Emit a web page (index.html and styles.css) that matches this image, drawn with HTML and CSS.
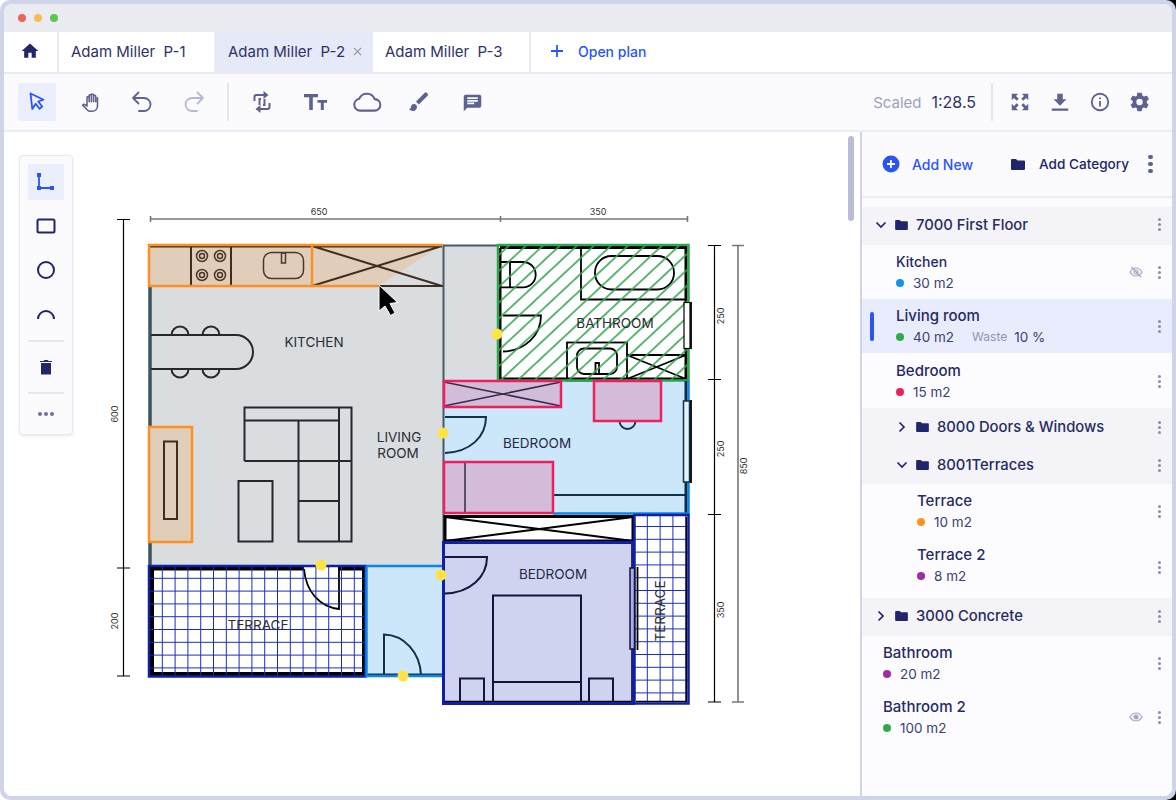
FILE: index.html
```html
<!DOCTYPE html>
<html lang="en">
<head>
<meta charset="utf-8">
<title>Plan</title>
<link rel="stylesheet" href="styles.css">
</head>
<body>
<div class="window">
  <div class="titlebar">
    <span class="light light-red"></span><span class="light light-yellow"></span><span class="light light-green"></span>
  </div>
  <div class="tabs">
    <div class="tab tab-home"><svg class="ico-20" viewBox="0 0 24 24"><path class="f-navy" d="M10 20v-6h4v6h5v-8h3L12 3 2 12h3v8z"/></svg></div>
    <div class="tab">Adam Miller&nbsp; P-1</div>
    <div class="tab tab-active">Adam Miller&nbsp; P-2<svg class="tab-x" viewBox="0 0 10 10"><path d="M1 1l8 8M9 1l-8 8"/></svg></div>
    <div class="tab">Adam Miller&nbsp; P-3</div>
    <div class="open-plan"><svg class="plus" viewBox="0 0 14 14"><path d="M7 1v12M1 7h12"/></svg><span>Open plan</span></div>
  </div>
  <div class="toolbar">
    <div class="tool tool-active"><svg class="ico-20" viewBox="0 0 20 20"><path class="s-blue" d="M3.500 1.500l13 6.200-5.300 1.800 4 5-2.700 2.300-3.900-5.100L5.300 17z"/></svg></div>
    <div class="tool tool-hand"><svg class="ico-21" viewBox="0 0 24 24"><path class="s-slate" d="M20 6.500V16c0 3.600-2.600 6-6 6h-2.300c-1.400 0-2.500-.6-3.300-1.500L3 15s1-1.300 2.200-.8L8 16V6.500a1.200 1.200 0 0 1 2.500 0V11V4.200a1.200 1.200 0 0 1 2.500 0V11V3.500a1.200 1.200 0 0 1 2.500 0V11V5a1.200 1.200 0 0 1 2.500 0v6"/></svg></div>
    <div class="tool tool-undo"><svg class="ico-24" viewBox="0 0 24 24"><path class="s-slate" d="M8.500 2.500L3 8l5.500 5.500M3 8H14a6.500 6.500 0 0 1 0 13H9"/></svg></div>
    <div class="tool tool-redo"><svg class="ico-24" viewBox="0 0 24 24"><path class="s-faded" d="M15.500 2.500L21 8l-5.500 5.500M21 8H10a6.500 6.500 0 0 0 0 13h5"/></svg></div>
    <div class="tool-sep"></div>
    <div class="tool tool-crop"><svg class="ico-24" viewBox="0 0 24 24"><path class="s-slate-b" d="M4.500 11V7a2 2 0 0 1 2-2H14M19.500 13v4a2 2 0 0 1-2 2H10M9.500 15v-6h1.500M14.500 9v6H13"/><path class="f-slate" d="M13.500 1l5 4-5 4zM10.500 15l-5 4 5 4z"/></svg></div>
    <div class="tool tool-text"><svg class="ico-24" viewBox="0 0 24 24"><path class="f-slate" d="M1 4h14v3.200H9.800V20H6.200V7.200H1zM14.500 10H24v2.800h-3.200V20h-3v-7.200h-3.300z"/></svg></div>
    <div class="tool tool-cloud"><svg class="ico-26" viewBox="0 0 26 26"><path class="s-slate" d="M7 20.500a5.200 5.200 0 0 1-.8-10.300A7.300 7.300 0 0 1 19.700 10.500 5 5 0 0 1 19.500 20.500z"/></svg></div>
    <div class="tool tool-brush"><svg class="ico-24" viewBox="0 0 24 24"><path class="f-slate" d="M7 14c-1.700 0-3 1.300-3 3 0 1.300-1.200 2-2 2 .9 1.200 2.500 2 4 2 2.200 0 4-1.800 4-4 0-1.700-1.300-3-3-3zM20.700 3.900l-1.300-1.300a1 1 0 0 0-1.400 0L9 11.600l2.800 2.800 9-9a1 1 0 0 0-.1-1.500z"/></svg></div>
    <div class="tool tool-comment"><svg class="ico-21" viewBox="0 0 24 24"><path class="f-slate" d="M20 3H4c-.9 0-2 1-2 2v17l4-4h14c1 0 2-1 2-2V5c0-1-1-2-2-2zM6 9h12v2H6zm8 5H6v-2h8zm4-6H6V6h12z"/></svg></div>
    <div class="scale"><span class="scale-label">Scaled</span><span class="scale-val">1:28.5</span></div>
    <div class="tool-sep tool-sep-r"></div>
    <div class="tool-r"><svg class="ico-22" viewBox="0 0 24 24"><path class="f-slate" d="M3 3h7L7.600 5.400l3 3-2.200 2.200-3-3L3 10zM21 3v7l-2.400-2.400-3 3-2.200-2.200 3-3L14 3zM3 21v-7l2.400 2.400 3-3 2.200 2.200-3 3L10 21zM21 21h-7l2.400-2.400-3-3 2.200-2.200 3 3L21 14z"/></svg></div>
    <div class="tool-r"><svg class="ico-22" viewBox="0 0 24 24"><path class="f-slate" d="M19 9h-4V3H9v6H5l7 7zM3 19h18v2.500H3z"/></svg></div>
    <div class="tool-r"><svg class="ico-22" viewBox="0 0 24 24"><path class="f-slate" fill-rule="evenodd" d="M12 2a10 10 0 1 0 0 20 10 10 0 0 0 0-20zm0 2a8 8 0 1 1 0 16 8 8 0 0 1 0-16zM11 7h2v2h-2zm0 4h2v6h-2z"/></svg></div>
    <div class="tool-r"><svg class="ico-22" viewBox="0 0 24 24"><path class="f-slate" d="M19.400 13c0-.3.100-.6.100-1s0-.7-.1-1l2.100-1.600c.2-.2.200-.4.100-.6l-2-3.500c-.1-.2-.4-.3-.6-.2l-2.500 1c-.5-.4-1.100-.7-1.700-1L14 2.400c0-.2-.2-.4-.5-.4h-4c-.2 0-.4.200-.5.400l-.4 2.700c-.6.200-1.200.6-1.700 1l-2.500-1c-.2-.1-.5 0-.6.200l-2 3.500c-.1.200-.1.400.1.600L4.100 11c0 .3-.1.700-.1 1s0 .7.100 1L2 14.600c-.2.200-.2.400-.1.600l2 3.500c.1.200.4.300.6.200l2.500-1c.5.400 1.100.7 1.700 1l.3 2.700c0 .2.200.4.500.4h4c.2 0 .4-.2.500-.4l.4-2.700c.6-.2 1.200-.6 1.700-1l2.500 1c.2.100.5 0 .6-.2l2-3.500c.1-.2.100-.4-.1-.6zM11.500 15.500a3.500 3.500 0 1 1 0-7 3.500 3.500 0 0 1 0 7z"/></svg></div>
  </div>
  <div class="main">
    <div class="canvas">
      <svg class="plan" viewBox="4 132 856 664">
        <defs>
          <pattern id="grid" patternUnits="userSpaceOnUse" x="155.900" y="571.900" width="12.800" height="12.800">
            <path d="M6.400 0V12.800M0 6.400H12.800" class="grid-line"/>
          </pattern>
          <pattern id="grid2" patternUnits="userSpaceOnUse" x="640.900" y="532.900" width="12.800" height="12.800">
            <path d="M6.400 0V12.800M0 6.400H12.800" class="grid-line"/>
          </pattern>
          <pattern id="hatch" patternUnits="userSpaceOnUse" width="11.600" height="11.600" patternTransform="translate(500 246) rotate(47)">
            <path d="M5.800 0V11.600" class="hatch-line"/>
          </pattern>
        </defs>

        <!-- rooms -->
        <path class="room-gray" d="M150 246H498V380H443V565H150z"/>
        <rect class="room-blue" x="443" y="380" width="245" height="134"/>
        <rect class="room-blue" x="366" y="565" width="77" height="111"/>
        <rect class="room-lav" x="443" y="542" width="191" height="162"/>
        <rect class="room-white" x="150" y="566" width="216" height="110"/>
        <rect class="room-white" x="634" y="515" width="55" height="189"/>
        <rect class="room-white" x="498" y="245" width="191" height="136"/>

        <!-- living room walls -->
        <path class="wall-slate" d="M150 286V566"/>
        <path class="wall-slate2" d="M443.500 245V541M443 245.500H498"/>

        <!-- kitchen -->
        <path class="fill-tan" d="M150 246H441L378 286H150z"/>
        <rect class="fill-tan" x="149" y="427" width="43" height="115"/>
        <path class="line-brown" d="M150 246.500H442M191 246V286M231 246V286M164 441.500h13V519h-13zM312 246L442 286M312 286L442 246M378 286H443"/>
        <g class="line-brown-thin">
          <circle cx="202" cy="256" r="5.500"/><circle cx="202" cy="256" r="2.500"/>
          <circle cx="220" cy="256" r="5.500"/><circle cx="220" cy="256" r="2.500"/>
          <circle cx="202" cy="275" r="5.500"/><circle cx="202" cy="275" r="2.500"/>
          <circle cx="220" cy="275" r="5.500"/><circle cx="220" cy="275" r="2.500"/>
          <rect x="263.500" y="252.500" width="40" height="26" rx="8"/>
          <rect x="281.500" y="253" width="4" height="10"/>
        </g>
        <path class="orange" d="M149 287V245H443M149 286H378M312 245V286M149 427H192V542H149z"/>

        <!-- furniture -->
        <g class="line-dark">
          <path d="M151 335H236a17 17 0 0 1 0 34H151"/>
          <path d="M171.500 335a8.500 8.500 0 0 1 17 0M202.500 335a8.500 8.500 0 0 1 17 0M171.500 369a8.500 8.500 0 0 0 17 0M202.500 369a8.500 8.500 0 0 0 17 0"/>
          <path d="M244.500 461V407.500H351.500V541.500H298.500V420.500M244.500 420.500H339M244.500 461H351.500M298.500 501H339M339 407.500V541.500"/>
          <rect x="238.500" y="481" width="34" height="60.500"/>
        </g>

        <!-- terrace -->
        <path class="wall-black" d="M304 568.500H152V674H364V568.500H338"/>
        <path class="line-black" d="M304 569C306 592 320 607 339 609V568"/>
        <rect class="grid-fill" x="150" y="566" width="216" height="110"/>
        <rect class="navy" x="149" y="566" width="216.500" height="110.500"/>

        <!-- hall -->
        <path class="line-navyblue" d="M384 675V634.500C404 635 420 652 421 675M367 674.500H443"/>
        <path class="bluee" d="M366.500 566V676H443M366.500 566H443"/>

        <!-- bathroom -->
        <g class="line-black">
          <path d="M499 262H523a12.700 12.700 0 0 1 0 25.400H499M510 262V287"/>
          <path d="M581 248V299.500H686"/>
          <rect x="595" y="256" width="79" height="33.500" rx="16.500"/>
          <path d="M503 315.500H541C541 335 525 351 503 351.500"/>
          <rect x="567" y="342.500" width="60" height="38"/>
          <rect x="577" y="348.500" width="40" height="25.500" rx="7"/>
          <path d="M595.500 374V363H599V374"/>
          <path d="M627 355H686M627 355L686 379M627 379L686 355"/>
        </g>
        <path class="wall-black-th" d="M500 248V379H686V247.500H500"/>
        <rect class="hatch-fill" x="499" y="246" width="189" height="134"/>
        <rect class="green" x="498" y="245" width="190.500" height="135.500"/>
        <rect class="window-white" x="684" y="302.500" width="6" height="46"/>
        <path class="line-black" d="M691 302V349"/>

        <!-- bedroom 1 -->
        <path class="line-deep" d="M445 417H486C486 437 470 452 445 453M553 495H686M619.500 421a8 8 0 0 0 16 0"/>
        <rect class="fill-pink" x="444" y="381" width="117" height="26"/>
        <rect class="fill-pink" x="594" y="381" width="67" height="40"/>
        <rect class="fill-pink" x="444" y="462" width="109" height="51"/>
        <path class="line-plum" d="M444 382L561 406M444 406L561 382M465 463V512"/>
        <path class="pink" d="M444 381H561V407H444zM594 381H661V421H594zM444 462H553V513H444z"/>
        <path class="wall-dark-r" d="M686 381V514"/>
        <path class="bluee" d="M553 513.500H688.500V381"/>
        <rect class="window-blue" x="683.500" y="401" width="6" height="81"/>
        <path class="line-black" d="M691 400V483"/>

        <!-- closet -->
        <rect class="closet" x="445" y="516.500" width="188" height="24.500"/>
        <path class="closet-x" d="M445 517L633 541M445 541L633 517"/>

        <!-- bedroom 2 -->
        <path class="line-ink" d="M444 557H487C487 577 470 593 445 593.500M493 702V595.500H581V702M493 682H581M460 702V678.500H484V702M589 702V678.500H613V702"/>
        <path class="wall-black-thin" d="M445 701.500H632V544"/>
        <rect class="navy-th" x="443.500" y="542.500" width="190" height="161"/>

        <!-- terrace 2 -->
        <rect class="grid2-fill" x="634" y="515" width="55" height="189"/>
        <path class="wall-black-thin" d="M636 701.500H686.500V517"/>
        <rect class="navy" x="634.500" y="515" width="54" height="188.500"/>
        <rect class="window-lav" x="630" y="568" width="4.500" height="81"/>
        <path class="line-black" d="M637.500 567V650"/>

        <!-- labels -->
        <text class="lbl" x="314" y="347">KITCHEN</text>
        <text class="lbl" x="399" y="442">LIVING</text>
        <text class="lbl" x="398" y="458">ROOM</text>
        <text class="lbl" x="615" y="327.500">BATHROOM</text>
        <text class="lbl lbl-b" x="537" y="448">BEDROOM</text>
        <text class="lbl lbl-b" x="553" y="578.500">BEDROOM</text>
        <text class="lbl" x="258" y="629.500">TERRACE</text>
        <text class="lbl" transform="translate(665 611) rotate(-90)">TERRACE</text>

        <!-- dimensions -->
        <path class="dim-gray" d="M150.500 219H688M150.500 216V222M500.500 216V222M687.500 216V222M738 245V702M732 245.500H744M732 702H744"/>
        <path class="dim-black" d="M123.500 219V676M117 219.500H130M117 568H130M117 676H130M714.500 245V702M708 245.500H721M708 379.500H721M708 514.500H721M708 702H721"/>
        <text class="dim" x="319" y="215">650</text>
        <text class="dim" x="598" y="215">350</text>
        <text class="dim" transform="translate(117.500 414) rotate(-90)">600</text>
        <text class="dim" transform="translate(117.500 621) rotate(-90)">200</text>
        <text class="dim" transform="translate(723.500 316) rotate(-90)">250</text>
        <text class="dim" transform="translate(723.500 449) rotate(-90)">250</text>
        <text class="dim" transform="translate(723.500 610) rotate(-90)">350</text>
        <text class="dim" transform="translate(747 466) rotate(-90)">850</text>

        <!-- handles -->
        <g class="dot">
          <circle cx="497" cy="334" r="5.500"/><circle cx="443" cy="433" r="5.500"/>
          <circle cx="321" cy="565" r="5.500"/><circle cx="441" cy="575" r="5.500"/>
          <circle cx="403" cy="676" r="5.500"/>
        </g>

        <!-- pointer -->
        <path class="pointer" d="M379 285V311L385 306 390.500 315.500 395 313 390 303.500 397.500 302.500z"/>
      </svg>
      <div class="scrollbar"></div>
      <div class="shape-panel">
        <div class="shape shape-active"><svg class="ico-20" viewBox="0 0 20 20"><path class="s-blue2" d="M3 3V16H16"/><path class="f-blue" d="M1 1h4v4H1zM1 14h4v4H1zM14 14h4v4h-4z"/></svg></div>
        <div class="shape"><svg class="ico-20" viewBox="0 0 20 20"><rect class="s-navy" x="1.500" y="3.500" width="17" height="13" rx="1.500"/></svg></div>
        <div class="shape"><svg class="ico-20" viewBox="0 0 20 20"><circle class="s-navy" cx="10" cy="10" r="8"/></svg></div>
        <div class="shape"><svg class="ico-20" viewBox="0 0 20 20"><path class="s-navy" d="M2 15a8 8 0 0 1 16 0"/></svg></div>
        <div class="shape-sep"></div>
        <div class="shape shape-short"><svg class="ico-20" viewBox="0 0 20 20"><path class="f-navy" d="M5 6h10v11.500H5zM4 4h3.500l1-1h3l1 1H16v1H4z"/></svg></div>
        <div class="shape-sep"></div>
        <div class="shape shape-more"><span class="hdot"></span><span class="hdot"></span><span class="hdot"></span></div>
      </div>
    </div>
    <aside class="side">
      <div class="side-head">
        <svg class="add-ico" viewBox="0 0 18 18"><circle class="f-blue" cx="9" cy="9" r="8.500"/><path class="s-white" d="M9 5v8M5 9h8"/></svg>
        <span class="add-new">Add New</span>
        <svg class="folder folder-head" viewBox="0 0 14 11"><path class="f-navy" d="M0 1a1 1 0 0 1 1-1h4l1.500 1.500H13a1 1 0 0 1 1 1V10a1 1 0 0 1-1 1H1a1 1 0 0 1-1-1z"/></svg>
        <span class="add-cat">Add Category</span>
        <span class="vdots vdots-lg"><i></i><i></i><i></i></span>
      </div>
      <div class="list">
        <div class="cat cat-first"><svg class="chev" viewBox="0 0 12 12"><path d="M1.500 3.500L6 8l4.500-4.500"/></svg><svg class="folder" viewBox="0 0 14 11"><path class="f-navy" d="M0 1a1 1 0 0 1 1-1h4l1.500 1.500H13a1 1 0 0 1 1 1V10a1 1 0 0 1-1 1H1a1 1 0 0 1-1-1z"/></svg><span class="cat-name">7000 First Floor</span><span class="vdots"><i></i><i></i><i></i></span></div>
        <div class="item ind-1">
          <div class="item-text"><div class="item-name item-name-sm">Kitchen</div><div class="item-sub"><span class="dot-c c-blue"></span>30 m2</div></div>
          <svg class="eye" viewBox="0 0 14 12"><path d="M1 6c1.500-2.600 3.500-4 6-4s4.500 1.400 6 4c-1.500 2.600-3.500 4-6 4s-4.500-1.400-6-4z"/><circle cx="7" cy="6" r="2"/><path d="M2.500 1l9.500 10"/></svg>
          <span class="vdots"><i></i><i></i><i></i></span>
        </div>
        <div class="item ind-1 item-active">
          <span class="marker"></span>
          <div class="item-text"><div class="item-name">Living room</div><div class="item-sub"><span class="dot-c c-green"></span>40 m2<span class="waste">Waste</span>10 %</div></div>
          <span class="vdots"><i></i><i></i><i></i></span>
        </div>
        <div class="item ind-1 item-wide">
          <div class="item-text"><div class="item-name">Bedroom</div><div class="item-sub"><span class="dot-c c-pink"></span>15 m2</div></div>
          <span class="vdots"><i></i><i></i><i></i></span>
        </div>
        <div class="cat ind-sub"><svg class="chev" viewBox="0 0 12 12"><path d="M3.500 1.500L8 6l-4.500 4.500"/></svg><svg class="folder" viewBox="0 0 14 11"><path class="f-navy" d="M0 1a1 1 0 0 1 1-1h4l1.500 1.500H13a1 1 0 0 1 1 1V10a1 1 0 0 1-1 1H1a1 1 0 0 1-1-1z"/></svg><span class="cat-name">8000 Doors &amp; Windows</span><span class="vdots"><i></i><i></i><i></i></span></div>
        <div class="cat ind-sub"><svg class="chev" viewBox="0 0 12 12"><path d="M1.500 3.500L6 8l4.500-4.500"/></svg><svg class="folder" viewBox="0 0 14 11"><path class="f-navy" d="M0 1a1 1 0 0 1 1-1h4l1.500 1.500H13a1 1 0 0 1 1 1V10a1 1 0 0 1-1 1H1a1 1 0 0 1-1-1z"/></svg><span class="cat-name">8001Terraces</span><span class="vdots"><i></i><i></i><i></i></span></div>
        <div class="item ind-2">
          <div class="item-text"><div class="item-name">Terrace</div><div class="item-sub"><span class="dot-c c-orange"></span>10 m2</div></div>
          <span class="vdots"><i></i><i></i><i></i></span>
        </div>
        <div class="item ind-2 item-tall">
          <div class="item-text"><div class="item-name">Terrace 2</div><div class="item-sub"><span class="dot-c c-purple"></span>8 m2</div></div>
          <span class="vdots"><i></i><i></i><i></i></span>
        </div>
        <div class="cat cat-up"><svg class="chev" viewBox="0 0 12 12"><path d="M3.500 1.500L8 6l-4.500 4.500"/></svg><svg class="folder" viewBox="0 0 14 11"><path class="f-navy" d="M0 1a1 1 0 0 1 1-1h4l1.500 1.500H13a1 1 0 0 1 1 1V10a1 1 0 0 1-1 1H1a1 1 0 0 1-1-1z"/></svg><span class="cat-name">3000 Concrete</span><span class="vdots"><i></i><i></i><i></i></span></div>
        <div class="item ind-0">
          <div class="item-text"><div class="item-name">Bathroom</div><div class="item-sub"><span class="dot-c c-purple"></span>20 m2</div></div>
          <span class="vdots"><i></i><i></i><i></i></span>
        </div>
        <div class="item ind-0">
          <div class="item-text"><div class="item-name">Bathroom 2</div><div class="item-sub"><span class="dot-c c-green"></span>100 m2</div></div>
          <svg class="eye" viewBox="0 0 14 12"><path d="M1 6c1.500-2.600 3.500-4 6-4s4.500 1.400 6 4c-1.500 2.600-3.500 4-6 4s-4.500-1.400-6-4z"/><circle class="eye-pupil" cx="7" cy="6" r="2"/></svg>
          <span class="vdots"><i></i><i></i><i></i></span>
        </div>
      </div>
    </aside>
  </div>
</div>
</body>
</html>
```
FILE: styles.css
```css
* { box-sizing: border-box; }
html { height: 100%; background: linear-gradient(135deg, #fff 50%, #000 50%); }
body { margin: 0; }
body {
  width: 1176px; height: 800px; overflow: hidden;
  background: #d0d4e8;
  border-radius: 10px;
  font-family: "Inter", "Liberation Sans", sans-serif;
  color: #262b63;
  padding: 4px;
}
svg { display: block; flex: none; }
.window { width: 1168px; height: 792px; background: #fff; border-radius: 8px; overflow: hidden; display: flex; flex-direction: column; }
.titlebar { height: 28px; background: #ebecf2; display: flex; align-items: center; gap: 8px; padding-left: 14px; }
.light { width: 8px; height: 8px; border-radius: 50%; }
.light-red { background: #ef6459; }
.light-yellow { background: #f6be4f; }
.light-green { background: #5cc84f; }

.tabs { height: 42px; display: flex; background: #fff; border-bottom: 2px solid #e9eaf2; }
.tab { width: 158px; padding: 0 0 2px 12px; display: flex; align-items: center; font-size: 15px; color: #2d3268; border-right: 2px solid #e9eaf2; background: #fff; }
.tab-home { width: 55px; padding-left: 16px; }
.tab:nth-child(2) { width: 157px; }
.tab-active { background: #e6e9f8; width: 157px; border-right: 0; }
.tab-x { width: 9px; height: 9px; margin-left: 8px; }
.tab-x path { stroke: #8a8fae; stroke-width: 1.200; fill: none; }
.open-plan { display: flex; align-items: center; padding: 0 0 2px 19px; color: #2a55f5; font-size: 14px; font-weight: 500; }
.plus { width: 14px; height: 14px; margin-right: 14px; }
.plus path { stroke: #2a55f5; stroke-width: 1.800; fill: none; }

.toolbar { height: 58px; background: #fbfbfd; border-bottom: 2px solid #eceef5; display: flex; align-items: center; padding-left: 14px; position: relative; }
.tool { width: 38px; height: 38px; display: flex; align-items: center; justify-content: center; border-radius: 2px; }
.tool-active { background: #eaeefd; }
.tool-hand { margin-left: 15px; }
.tool-undo { margin-left: 14px; }
.tool-redo { margin-left: 14px; }
.tool-sep { width: 2px; height: 38px; background: #e3e5f0; margin-left: 14px; }
.tool-crop { margin-left: 14px; }
.tool-text { margin-left: 15px; }
.tool-cloud { margin-left: 14px; }
.tool-brush { margin-left: 14px; }
.tool-comment { margin-left: 15px; }
.scale { margin-left: auto; font-size: 15px; display: flex; align-items: baseline; gap: 10px; }
.scale-label { color: #9b9fbf; }
.scale-val { color: #2d3268; font-size: 16px; }
.tool-sep-r { margin-left: 15px; }
.tool-r { width: 40px; display: flex; justify-content: center; }
.tool-sep-r + .tool-r { margin-left: 7px; }
.tool-r:last-child { margin-right: 12px; }

.ico-20 { width: 20px; height: 20px; }
.ico-21 { width: 21px; height: 21px; }
.ico-22 { width: 22px; height: 22px; }
.ico-24 { width: 24px; height: 24px; }
.ico-26 { width: 30px; height: 30px; }
.f-navy { fill: #21266a; }
.f-slate { fill: #5d6290; }
.f-blue { fill: #2a55f5; }
.s-blue { fill: none; stroke: #2a55f5; stroke-width: 1.800; stroke-linejoin: round; }
.s-blue2 { fill: none; stroke: #2a55f5; stroke-width: 1.800; }
.s-slate { fill: none; stroke: #5d6290; stroke-width: 1.800; stroke-linecap: round; stroke-linejoin: round; }
.s-slate-b { fill: none; stroke: #5d6290; stroke-width: 2; }
.s-faded { fill: none; stroke: #b5b9d4; stroke-width: 1.800; stroke-linecap: round; stroke-linejoin: round; }
.s-navy { fill: none; stroke: #21266a; stroke-width: 2; }
.s-white { fill: none; stroke: #fff; stroke-width: 1.800; }

.main { flex: 1; display: flex; min-height: 0; }
.canvas { width: 856px; height: 664px; position: relative; background: #fff; flex: none; }
.plan { width: 856px; height: 664px; }
.scrollbar { position: absolute; left: 844px; top: 4px; width: 6px; height: 85px; border-radius: 3px; background: #b9bdd6; }

.shape-panel { position: absolute; left: 15px; top: 23px; width: 54px; padding: 8px 8px 0; background: #fbfbfd; border: 1px solid #e7e9f2; border-radius: 4px; box-shadow: 0 1px 3px rgba(40,44,100,.10); display: flex; flex-direction: column; height: 280px; }
.shape { width: 36px; height: 36px; display: flex; align-items: center; justify-content: center; margin-bottom: 8px; border-radius: 2px; flex: none; }
.shape-active { background: #eaeefd; }
.shape-sep { height: 2px; background: #e6e7f0; flex: none; }
.shape-short { margin: 7px 0; }
.shape-more { gap: 2px; margin: 2px 0 0; }
.hdot { width: 4px; height: 4px; background: #6e7299; border-radius: 50%; }

.side { width: 312px; flex: none; background: #fcfcfe; border-left: 2px solid #d0d4e8; }
.side-head { height: 66px; border-bottom: 2px solid #ecedf4; display: flex; align-items: center; padding-left: 20px; font-size: 14px; font-weight: 500; background: #fbfbfd; }
.add-ico { width: 18px; height: 18px; margin-right: 12px; }
.add-new { color: #2a55f5; width: 99px; font-weight: 500; }
.folder { width: 13px; height: 10px; }
.folder-head { margin-right: 14px; width: 14px; height: 11px; }
.add-cat { color: #21266a; font-weight: 500; width: 102px; font-size: 13.600px; }
.vdots { display: flex; flex-direction: column; gap: 2px; width: 3px; margin-left: auto; margin-right: 11px; flex: none; }
.vdots i { width: 3px; height: 3px; border-radius: 50%; background: #8a8dac; display: block; }
.vdots-lg { gap: 2.500px; margin-left: 7px; margin-right: 0; width: 5px; }
.vdots-lg i { width: 4.500px; height: 4.500px; background: #5d6290; }

.list { padding-top: 9px; }
.cat { height: 38px; background: #f4f4f8; display: flex; align-items: center; padding-left: 13px; }
.cat-first { padding-bottom: 3px; }
.cat-up { padding-bottom: 2px; }
.ind-sub { padding-left: 34px; }
.chev { width: 12px; height: 12px; margin-right: 8px; }
.chev path { fill: none; stroke: #21266a; stroke-width: 1.700; }
.cat-name { font-size: 14.800px; font-weight: 500; color: #262b63; margin-left: 8px; }
.item { height: 54px; display: flex; align-items: center; position: relative; }
.item-wide { height: 55px; padding-top: 1px; }
.item-tall { height: 60px; align-items: flex-start; padding-top: 6px; }
.item-tall .vdots { margin-top: 17px; }
.ind-0 { padding-left: 21px; }
.ind-1 { padding-left: 34px; }
.ind-2 { padding-left: 55px; }
.item-active { background: #e9ecfc; }
.marker { position: absolute; left: 8px; top: 13px; width: 4px; height: 29px; background: #2a55f5; border-radius: 2px; }
.item-text { display: flex; flex-direction: column; gap: 1px; padding-top: 1px; }
.item-name { font-size: 15px; font-weight: 500; line-height: 20px; color: #262b63; }
.item-name-sm { font-size: 14px; }
.item-sub { font-size: 13.500px; line-height: 20px; color: #3a3f72; display: flex; align-items: center; }
.dot-c { width: 8px; height: 8px; border-radius: 50%; margin-right: 9px; }
.c-blue { background: #0e93f0; }
.c-green { background: #2fab4e; }
.c-pink { background: #ee1f5c; }
.c-orange { background: #ff9420; }
.c-purple { background: #a12ba3; }
.waste { font-size: 12px; color: #9094b6; margin: 0 7px 0 18px; }
.eye { width: 14px; height: 12px; margin-left: auto; margin-right: 15px; }
.eye path, .eye circle { fill: none; stroke: #a5a8c4; stroke-width: 1.200; }
.eye-pupil { fill: #a5a8c4 !important; }
.eye + .vdots { margin-left: 0; }

/* plan */
.room-gray { fill: #dadde0; }
.room-blue { fill: #cce7fa; }
.room-lav { fill: #d0d3f0; }
.room-white { fill: #fff; }
.fill-tan { fill: #e0cebb; }
.fill-pink { fill: #d2bcd9; }
.wall-slate { fill: none; stroke: #3c5362; stroke-width: 3.500; }
.wall-slate2 { fill: none; stroke: #45596a; stroke-width: 2; }
.line-brown { fill: none; stroke: #3f2e20; stroke-width: 2; }
.line-brown-thin { fill: none; stroke: #4a3728; stroke-width: 1.500; }
.orange { fill: none; stroke: #ff8f20; stroke-width: 2.500; }
.line-dark { fill: none; stroke: #25292c; stroke-width: 2; }
.grid-line { fill: none; stroke: #1a2cb8; stroke-width: 1; }
.grid-fill { fill: url(#grid); }
.grid2-fill { fill: url(#grid2); }
.hatch-line { fill: none; stroke: #35a650; stroke-width: 1.600; }
.hatch-fill { fill: url(#hatch); }
.wall-black { fill: none; stroke: #000; stroke-width: 4; }
.wall-black-th { fill: none; stroke: #000; stroke-width: 3; }
.wall-black-thin { fill: none; stroke: #000; stroke-width: 1.500; }
.line-black { fill: none; stroke: #000; stroke-width: 1.800; }
.navy { fill: none; stroke: #0f1fa8; stroke-width: 2.500; }
.navy-th { fill: none; stroke: #0f1fa8; stroke-width: 3; }
.line-navyblue { fill: none; stroke: #10304a; stroke-width: 2; }
.bluee { fill: none; stroke: #0a86e8; stroke-width: 2.500; }
.green { fill: none; stroke: #2ca74b; stroke-width: 2.500; }
.window-white { fill: #fff; stroke: #000; stroke-width: 1.200; }
.line-deep { fill: none; stroke: #12324a; stroke-width: 2; }
.line-plum { fill: none; stroke: #352a4c; stroke-width: 1.500; }
.pink { fill: none; stroke: #ee1f5c; stroke-width: 2.500; }
.wall-dark-r { fill: none; stroke: #0e2a3e; stroke-width: 3; }
.window-blue { fill: #e4f3fd; stroke: #12324a; stroke-width: 1.500; }
.window-lav { fill: #aab0e6; stroke: #10143a; stroke-width: 1.500; }
.closet { fill: #fff; stroke: #000; stroke-width: 3; }
.closet-x { fill: none; stroke: #000; stroke-width: 2; }
.line-ink { fill: none; stroke: #12163e; stroke-width: 2; }
.lbl { font-family: "Inter", "Liberation Sans", sans-serif; font-size: 13.500px; fill: #2a2d33; text-anchor: middle; }
.lbl-b { fill: #1f2a45; }
.dim-gray { fill: none; stroke: #777; stroke-width: 1.600; }
.dim-black { fill: none; stroke: #000; stroke-width: 1.200; }
.dim { font-family: "Inter", "Liberation Sans", sans-serif; font-size: 9px; fill: #333; text-anchor: middle; }
.dot circle { fill: #fde344; }
.pointer { fill: #000; stroke: #fff; stroke-width: 1; stroke-linejoin: round; }
```
